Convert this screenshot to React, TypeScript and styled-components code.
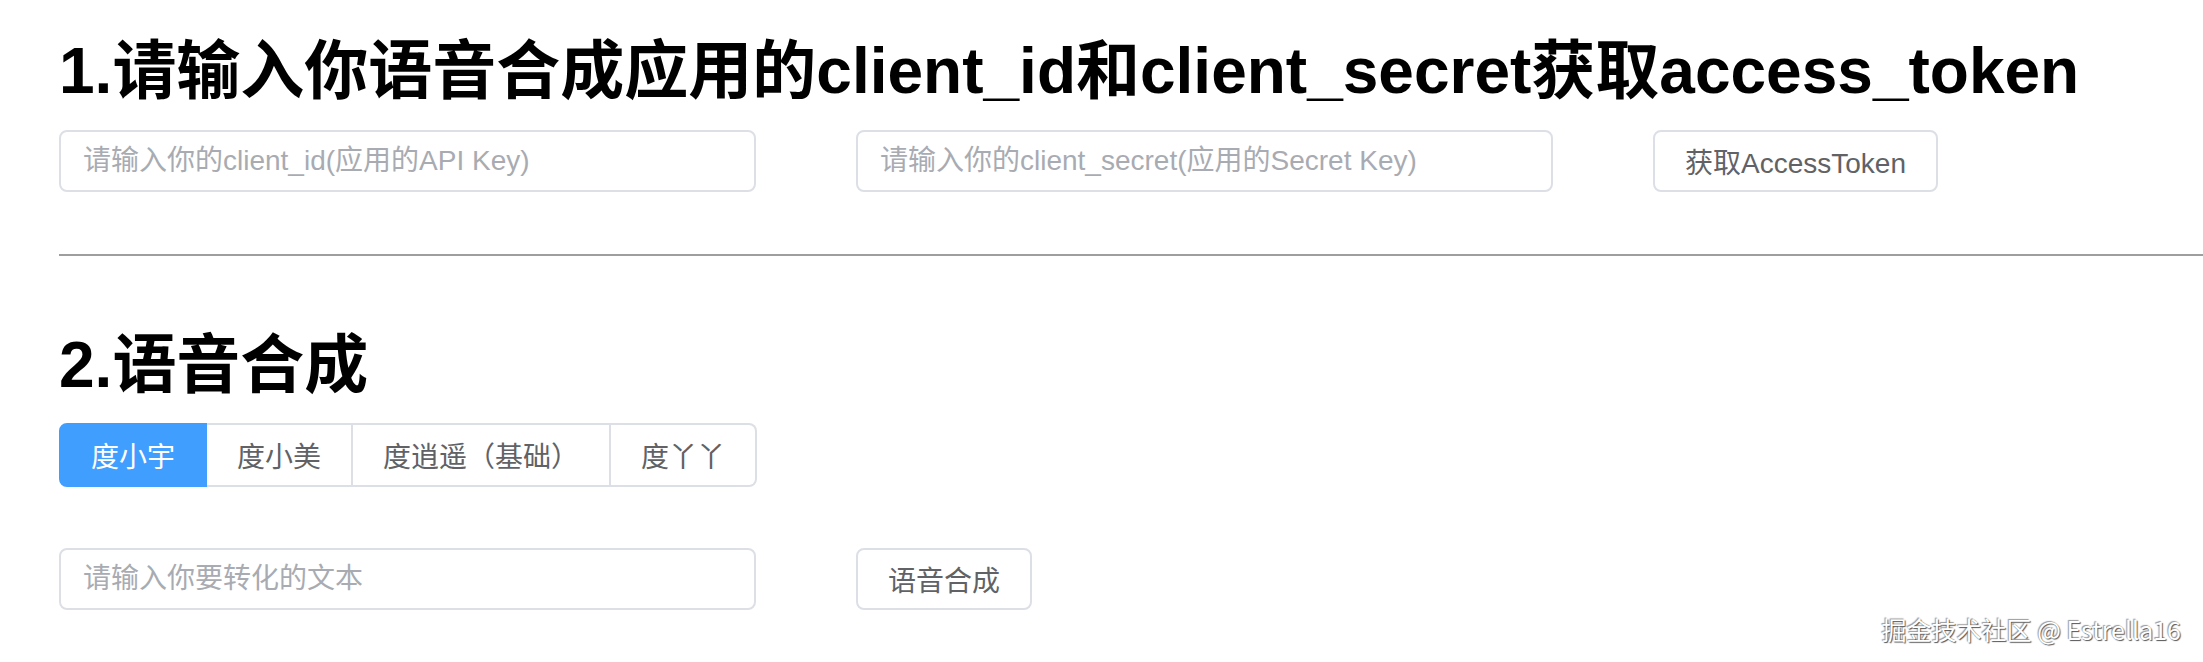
import styled, { createGlobalStyle } from "styled-components";
import { useState } from "react";

const GlobalStyle = createGlobalStyle`
  html, body {
    margin: 0;
    padding: 0;
    background: #fff;
  }
  body {
    font-family: "Liberation Sans", "Noto Sans CJK SC", sans-serif;
  }
`;

const voices = ["度小宇", "度小美", "度逍遥（基础）", "度丫丫"];

const App = () => {
  const [voice, setVoice] = useState(0);
  return (
    <Page>
      <GlobalStyle />
      <Title>1.请输入你语音合成应用的client_id和client_secret获取access_token</Title>
      <Row>
        <TextInput placeholder="请输入你的client_id(应用的API Key)" />
        <TextInput placeholder="请输入你的client_secret(应用的Secret Key)" />
        <Button>获取AccessToken</Button>
      </Row>
      <Divider />
      <Title $top={71}>2.语音合成</Title>
      <TabGroup>
        {voices.map((v, i) => (
          <TabItem key={i} $active={voice === i} onClick={() => setVoice(i)}>
            {v}
          </TabItem>
        ))}
      </TabGroup>
      <Row $top={61}>
        <TextInput placeholder="请输入你要转化的文本" />
        <Button>语音合成</Button>
      </Row>
      <Watermark>掘金技术社区 @ Estrella16</Watermark>
    </Page>
  );
};

const Page = styled.div`
  position: relative;
  min-height: 662px;
  box-sizing: border-box;
  padding: 33px 0 0 59px;
  overflow: hidden;
`;

const Title = styled.h1<{ $top?: number }>`
  margin: ${(p) => p.$top ?? 0}px 0 0;
  font-size: 64px;
  line-height: 76px;
  font-weight: 700;
  color: #000;
  white-space: nowrap;
`;

const Row = styled.div<{ $top?: number }>`
  display: flex;
  align-items: center;
  gap: 100px;
  margin-top: ${(p) => p.$top ?? 21}px;
`;

const TextInput = styled.input`
  width: 697px;
  height: 62px;
  box-sizing: border-box;
  padding: 0 22px;
  border: 2px solid #dcdfe6;
  border-radius: 8px;
  font-family: inherit;
  font-size: 28px;
  color: #606266;
  outline: none;

  &::placeholder {
    color: #a8abb2;
  }
`;

const Button = styled.button`
  height: 62px;
  box-sizing: border-box;
  padding: 0 30px;
  border: 2px solid #dcdfe6;
  border-radius: 8px;
  background: #fff;
  font-family: inherit;
  font-size: 28px;
  color: #606266;
  cursor: pointer;
`;

const Divider = styled.hr`
  margin: 62px 0 0;
  height: 2px;
  border: none;
  background: #9e9e9e;
`;

const TabGroup = styled.div`
  display: flex;
  width: max-content;
  margin-top: 20px;
`;

const TabItem = styled.div<{ $active: boolean }>`
  height: 64px;
  box-sizing: border-box;
  display: flex;
  align-items: center;
  padding: 0 30px;
  font-size: 28px;
  border: 2px solid ${(p) => (p.$active ? "#409eff" : "#dcdfe6")};
  border-left-width: 0;
  background: ${(p) => (p.$active ? "#409eff" : "#fff")};
  color: ${(p) => (p.$active ? "#fff" : "#606266")};
  cursor: pointer;

  &:first-child {
    border-left-width: 2px;
    border-radius: 8px 0 0 8px;
  }
  &:last-child {
    border-radius: 0 8px 8px 0;
  }
`;

const Watermark = styled.div`
  position: absolute;
  right: 22px;
  bottom: 18px;
  font-family: "Noto Sans CJK SC", sans-serif;
  font-size: 25px;
  line-height: 30px;
  color: #fff;
  text-shadow: 1px 1px 1px #555, -1px -1px 1px #999;
  white-space: nowrap;
`;

export default App;
